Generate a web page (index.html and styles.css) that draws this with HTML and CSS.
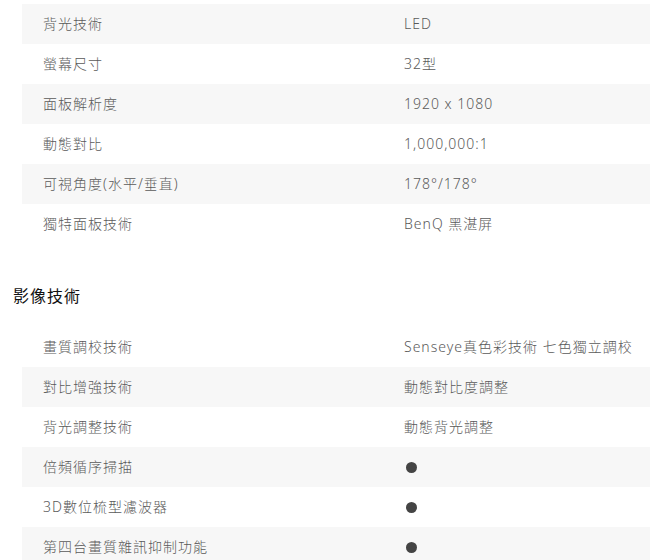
FILE: index.html
```html
<!DOCTYPE html>
<html lang="zh-Hant">
<head>
<meta charset="utf-8">
<title>規格</title>
<link rel="stylesheet" href="styles.css">
</head>
<body>
<div class="page">
  <div class="spec-table">
    <div class="row alt"><div class="label">背光技術</div><div class="value">LED</div></div>
    <div class="row"><div class="label">螢幕尺寸</div><div class="value">32型</div></div>
    <div class="row alt"><div class="label">面板解析度</div><div class="value">1920 x 1080</div></div>
    <div class="row"><div class="label">動態對比</div><div class="value">1,000,000:1</div></div>
    <div class="row alt"><div class="label">可視角度(水平/垂直)</div><div class="value">178°/178°</div></div>
    <div class="row"><div class="label">獨特面板技術</div><div class="value">BenQ 黑湛屏</div></div>
  </div>

  <h2 class="section-title">影像技術</h2>

  <div class="spec-table">
    <div class="row"><div class="label">畫質調校技術</div><div class="value">Senseye真色彩技術 七色獨立調校</div></div>
    <div class="row alt"><div class="label">對比增強技術</div><div class="value">動態對比度調整</div></div>
    <div class="row"><div class="label">背光調整技術</div><div class="value">動態背光調整</div></div>
    <div class="row alt"><div class="label">倍頻循序掃描</div><div class="value"><span class="dot" aria-label="●"></span></div></div>
    <div class="row"><div class="label">3D數位梳型濾波器</div><div class="value"><span class="dot" aria-label="●"></span></div></div>
    <div class="row alt"><div class="label">第四台畫質雜訊抑制功能</div><div class="value"><span class="dot" aria-label="●"></span></div></div>
  </div>
</div>
</body>
</html>
```

FILE: styles.css
```css
html, body {
  margin: 0;
  padding: 0;
  background: #ffffff;
}

body {
  font-family: "Noto Sans", "Noto Sans CJK TC", sans-serif;
  color: #5a5a5a;
  font-size: 14px;
  font-weight: 300;
}

.page {
  padding-top: 4px;
  width: 650px;
  overflow: hidden;
}

.spec-table {
  margin-left: 22px;
  width: 640px;
  display: flex;
  flex-direction: column;
}

.row {
  display: grid;
  grid-template-columns: 382px 1fr;
  height: 40px;
  box-sizing: border-box;
  padding-bottom: 2px;
  align-items: center;
  background: #ffffff;
}

.row.alt {
  background: #f7f7f7;
}

.label {
  padding-left: 21px;
  letter-spacing: 1px;
  white-space: nowrap;
}

.value {
  letter-spacing: 1px;
  white-space: nowrap;
  display: flex;
  align-items: center;
}

.dot {
  display: inline-block;
  width: 11px;
  height: 11px;
  border-radius: 50%;
  background: #444444;
  margin-left: 2px;
  margin-top: 2px;
}

.section-title {
  margin: 40px 0 19px 13px;
  font-size: 16px;
  line-height: 24px;
  font-weight: 400;
  color: #111111;
  letter-spacing: 1px;
}
```
